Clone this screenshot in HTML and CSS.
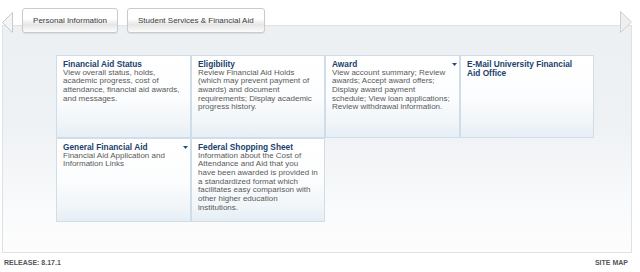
FILE: index.html
```html
<!DOCTYPE html>
<html>
<head>
<meta charset="utf-8">
<title>Financial Aid</title>
<link rel="stylesheet" href="styles.css">
</head>
<body>
<div class="page">
  <div class="tabbar">
    <svg class="nav-arrow nav-left" width="11" height="21" viewBox="0 0 11 21"><polygon points="10.5,0.5 0.5,10.5 10.5,20.5" fill="#f5f5f5" stroke="#c9c9c9" stroke-width="1"/></svg>
    <div class="tab">Personal Information</div>
    <div class="tab">Student Services &amp; Financial Aid</div>
    <svg class="nav-arrow nav-right" width="12" height="22" viewBox="0 0 12 22"><polygon points="0.5,0.5 11.5,11 0.5,21.5" fill="#efefef" stroke="#cfcfcf" stroke-width="1"/></svg>
  </div>
  <div class="panel">
    <div class="cards">
      <div class="card">
        <div class="card-title"><span>Financial Aid Status</span></div>
        <div class="card-desc">View overall status, holds,<br>academic progress, cost of<br>attendance, financial aid awards,<br>and messages.</div>
      </div>
      <div class="card">
        <div class="card-title"><span>Eligibility</span></div>
        <div class="card-desc">Review Financial Aid Holds<br>(which may prevent payment of<br>awards) and document<br>requirements; Display academic<br>progress history.</div>
      </div>
      <div class="card">
        <div class="card-title"><span>Award</span><svg class="drop" width="5" height="3" viewBox="0 0 5 3"><polygon points="0,0 5,0 2.5,3" fill="#1d4f8e"/></svg></div>
        <div class="card-desc">View account summary; Review<br>awards; Accept award offers;<br>Display award payment<br>schedule; View loan applications;<br>Review withdrawal information.</div>
      </div>
      <div class="card">
        <div class="card-title"><span>E-Mail University Financial<br>Aid Office</span></div>
      </div>
      <div class="card">
        <div class="card-title"><span>General Financial Aid</span><svg class="drop" width="5" height="3" viewBox="0 0 5 3"><polygon points="0,0 5,0 2.5,3" fill="#1d4f8e"/></svg></div>
        <div class="card-desc">Financial Aid Application and<br>Information Links</div>
      </div>
      <div class="card">
        <div class="card-title"><span>Federal Shopping Sheet</span></div>
        <div class="card-desc">Information about the Cost of<br>Attendance and Aid that you<br>have been awarded is provided in<br>a standardized format which<br>facilitates easy comparison with<br>other higher education<br>institutions.</div>
      </div>
    </div>
  </div>
  <div class="footer">
    <span>RELEASE: 8.17.1</span>
    <span>SITE MAP</span>
  </div>
</div>
</body>
</html>
```
FILE: styles.css
```css
html, body {
  margin: 0;
  padding: 0;
  background: #ffffff;
}
body {
  font-family: "Liberation Sans", Arial, sans-serif;
}
.page {
  width: 640px;
  height: 272px;
  overflow: hidden;
}
.tabbar {
  display: flex;
  align-items: flex-start;
  height: 33px;
  position: relative;
  z-index: 1;
}
.nav-arrow {
  display: block;
  flex: none;
}
.nav-left {
  margin-left: 2px;
  margin-top: 12px;
}
.nav-right {
  margin-left: auto;
  margin-top: 11px;
  margin-right: 8px;
}
.tab {
  box-sizing: border-box;
  height: 25px;
  margin-top: 8px;
  margin-left: 9px;
  padding: 0 10px;
  display: flex;
  align-items: center;
  justify-content: center;
  font-size: 8px;
  color: #3c3c3c;
  border: 1px solid #cacaca;
  border-radius: 3px;
  background: linear-gradient(to bottom, #ffffff 0%, #ffffff 42%, #e6e6e6 68%, #f4f4f4 88%, #fbfbfb 100%);
  box-shadow: 0 1px 1px rgba(0, 0, 0, 0.08);
  white-space: nowrap;
}
.tab:first-of-type {
  width: 96px;
}
.panel {
  box-sizing: border-box;
  height: 228px;
  margin: -8px 8px 0 2px;
  border: 1px solid #dce2e7;
  background: linear-gradient(to bottom, #edf0f3 0%, #eff2f5 45%, #f9fafb 80%, #fdfdfd 100%);
  padding: 29px 0 0 53px;
}
.cards {
  display: grid;
  grid-template-columns: 135px 134px 135px 134px;
  grid-template-rows: 83px 84px;
}
.card {
  box-sizing: border-box;
  border: 1px solid #cfdde8;
  padding: 4px 4px 0 6px;
  background: linear-gradient(to bottom, #ffffff 0%, #fcfdfe 50%, #f1f6f9 80%, #e6eef5 100%);
}
.card-title {
  display: flex;
  justify-content: space-between;
  align-items: flex-start;
  font-size: 8.3px;
  line-height: 8.67px;
  font-weight: bold;
  color: #213f6d;
}
.drop {
  display: block;
  flex: none;
  margin-top: 3px;
  margin-right: -2px;
}
.card-desc {
  font-size: 8px;
  line-height: 8.67px;
  color: #5a5a5a;
}
.footer {
  display: flex;
  justify-content: space-between;
  padding: 5px 12px 0 4px;
  font-family: "Liberation Sans", Arial, sans-serif;
  font-size: 7px;
  line-height: 9px;
  font-weight: bold;
  color: #555555;
}
```
